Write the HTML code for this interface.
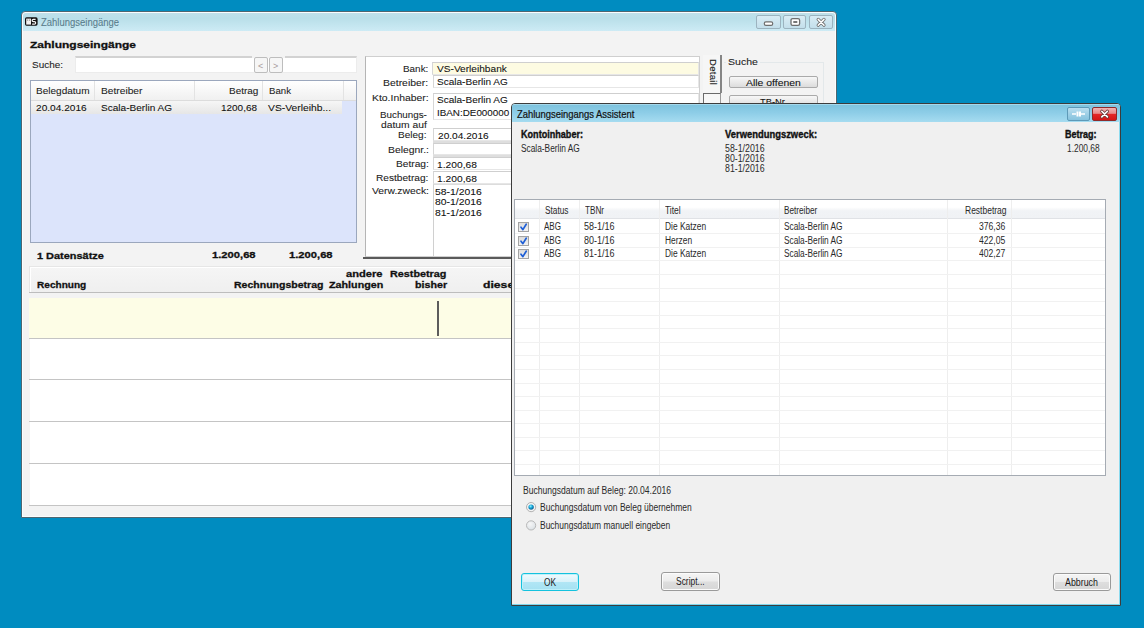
<!DOCTYPE html>
<html><head><meta charset="utf-8"><style>
html,body{margin:0;padding:0;}
body{width:1144px;height:628px;overflow:hidden;position:relative;background:#008cc0;font-family:"Liberation Sans",sans-serif;}
div,span{position:absolute;}
span{white-space:nowrap;}
</style></head><body>
<div style="left:21px;top:11px;width:816px;height:507px;background:#f3f3f3;border:1px solid #4f6670;border-radius:4px 4px 0 0;box-sizing:border-box;box-shadow:inset 0 0 0 1px #fbfdfe;"></div>
<div style="left:23px;top:13px;width:812px;height:18px;background:linear-gradient(#bfe0ea,#b9dfe9 30%,#cdebf5);border-radius:3px 3px 0 0;"></div>
<svg style="position:absolute;left:24px;top:16px" width="16" height="11" viewBox="0 0 16 11"><rect x="1" y="1.3" width="12.6" height="8.4" rx="1.6" fill="#111"/><rect x="2.2" y="2.6" width="4.8" height="6" fill="#f2f2f2"/><rect x="3" y="3.6" width="1.2" height="1" fill="#888"/><rect x="5" y="3.6" width="1.2" height="1" fill="#888"/><path d="M11.6 3.3 H9.4 Q8.2 3.3 8.2 4.6 Q8.2 5.7 9.4 5.7 H10.4 Q11.7 5.7 11.7 6.9 Q11.7 8.1 10.4 8.1 H8.1" fill="none" stroke="#f4f4f4" stroke-width="1.2"/></svg>
<span style="left:41.00px;top:17.63px;font-size:10px;line-height:10px;color:#5a7d8c;-webkit-text-stroke:0.08px #5a7d8c;transform-origin:0 0;transform:scaleX(0.9480);">Zahlungseingänge</span>
<div style="left:756px;top:15px;width:25px;height:14px;background:linear-gradient(#d9ecf4,#c3dfeb);border:1px solid #9cb3bf;box-sizing:border-box;border-radius:2px;"></div>
<div style="left:783px;top:15px;width:23px;height:14px;background:linear-gradient(#d9ecf4,#c3dfeb);border:1px solid #9cb3bf;box-sizing:border-box;border-radius:2px;"></div>
<div style="left:809px;top:15px;width:24px;height:14px;background:linear-gradient(#d9ecf4,#c3dfeb);border:1px solid #9cb3bf;box-sizing:border-box;border-radius:2px;"></div>
<svg style="position:absolute;left:756px;top:15px" width="80" height="14" viewBox="0 0 80 14"><rect x="8.3" y="6.8" width="8.4" height="3.6" rx="1.6" fill="#fff" stroke="#6e6e6e" stroke-width="1.2"/><rect x="35" y="3.6" width="8.6" height="6.8" rx="1.6" fill="#fff" stroke="#6e6e6e" stroke-width="1.3"/><rect x="37.3" y="6" width="4" height="2" fill="#777"/><path d="M62.2 4.4 L68 10.2 M68 4.4 L62.2 10.2" stroke="#6e6e6e" stroke-width="3.2" stroke-linecap="round"/><path d="M62.2 4.4 L68 10.2 M68 4.4 L62.2 10.2" stroke="#fff" stroke-width="1.5" stroke-linecap="round"/></svg>
<span style="left:30.00px;top:39.90px;font-size:9.8px;line-height:9.8px;color:#111;font-weight:bold;-webkit-text-stroke:0.3px #111;transform-origin:0 0;transform:scaleX(1.2245);">Zahlungseingänge</span>
<span style="left:32.30px;top:61.28px;font-size:9px;line-height:9px;color:#222;-webkit-text-stroke:0.08px #222;transform-origin:0 0;transform:scaleX(1.1064);">Suche:</span>
<div style="left:75px;top:56px;width:282px;height:17px;background:#fff;border:1px solid #ececec;border-top:2px solid #d2d2d2;box-sizing:border-box;"></div>
<div style="left:252px;top:56px;width:33px;height:2px;background:#f3f3f3;"></div>
<div style="left:254px;top:57px;width:14px;height:16px;background:#f6f6f6;border:1px solid #bdbdbd;box-sizing:border-box;border-radius:2px;"></div>
<div style="left:269px;top:57px;width:14px;height:16px;background:#f6f6f6;border:1px solid #bdbdbd;box-sizing:border-box;border-radius:2px;"></div>
<span style="left:258.00px;top:61.58px;font-size:9px;line-height:9px;color:#a89c9c;"><</span>
<span style="left:273.00px;top:61.58px;font-size:9px;line-height:9px;color:#a89c9c;">></span>
<div style="left:30px;top:80px;width:327px;height:163px;background:#dce4fb;border:1px solid #9ba7bd;box-sizing:border-box;"></div>
<div style="left:31px;top:81px;width:325px;height:19px;background:linear-gradient(#fff,#f0f0f0);"></div>
<div style="left:31px;top:100px;width:325px;height:1px;background:#dcdcdc;"></div>
<div style="left:94px;top:81px;width:1px;height:19px;background:#e3e3e3;"></div>
<div style="left:194px;top:81px;width:1px;height:19px;background:#e3e3e3;"></div>
<div style="left:262px;top:81px;width:1px;height:19px;background:#e3e3e3;"></div>
<div style="left:343px;top:81px;width:1px;height:19px;background:#e3e3e3;"></div>
<div style="left:31px;top:101px;width:311px;height:13px;background:linear-gradient(#f6f6f6,#e6e6e6);"></div>
<span style="left:36.40px;top:86.32px;font-size:9.9px;line-height:9.9px;color:#222;-webkit-text-stroke:0.08px #222;transform-origin:0 0;transform:scaleX(1.0164);">Belegdatum</span>
<span style="left:100.50px;top:86.32px;font-size:9.9px;line-height:9.9px;color:#222;-webkit-text-stroke:0.08px #222;transform-origin:0 0;transform:scaleX(1.0332);">Betreiber</span>
<span style="left:228.50px;top:86.32px;font-size:9.9px;line-height:9.9px;color:#222;-webkit-text-stroke:0.08px #222;transform-origin:0 0;transform:scaleX(1.0080);">Betrag</span>
<span style="left:268.60px;top:86.32px;font-size:9.9px;line-height:9.9px;color:#222;-webkit-text-stroke:0.08px #222;transform-origin:0 0;transform:scaleX(0.9750);">Bank</span>
<span style="left:36.40px;top:103.12px;font-size:9.9px;line-height:9.9px;color:#111;-webkit-text-stroke:0.08px #111;transform-origin:0 0;transform:scaleX(1.0254);">20.04.2016</span>
<span style="left:100.50px;top:103.12px;font-size:9.9px;line-height:9.9px;color:#111;-webkit-text-stroke:0.08px #111;transform-origin:0 0;transform:scaleX(1.0189);">Scala-Berlin AG</span>
<span style="left:220.70px;top:103.12px;font-size:9.9px;line-height:9.9px;color:#111;-webkit-text-stroke:0.08px #111;transform-origin:0 0;transform:scaleX(1.0089);">1200,68</span>
<span style="left:268.30px;top:103.12px;font-size:9.9px;line-height:9.9px;color:#111;-webkit-text-stroke:0.08px #111;transform-origin:0 0;transform:scaleX(1.0441);">VS-Verleihb...</span>
<span style="left:36.80px;top:250.62px;font-size:9.9px;line-height:9.9px;color:#111;font-weight:bold;-webkit-text-stroke:0.3px #111;transform-origin:0 0;transform:scaleX(1.1070);">1 Datensätze</span>
<span style="left:212.10px;top:250.12px;font-size:9.9px;line-height:9.9px;color:#111;font-weight:bold;-webkit-text-stroke:0.3px #111;transform-origin:0 0;transform:scaleX(1.1341);">1.200,68</span>
<span style="left:288.50px;top:250.12px;font-size:9.9px;line-height:9.9px;color:#111;font-weight:bold;-webkit-text-stroke:0.3px #111;transform-origin:0 0;transform:scaleX(1.1341);">1.200,68</span>
<div style="left:365px;top:56px;width:335px;height:201px;background:#fff;border:1px solid #cfcfcf;border-left:1.5px solid #b5b5b5;box-sizing:border-box;"></div>
<div style="left:363px;top:257px;width:338px;height:1.5px;background:#5a5a5a;"></div>
<span style="left:403.10px;top:64.02px;font-size:9.9px;line-height:9.9px;color:#222;-webkit-text-stroke:0.08px #222;transform-origin:0 0;transform:scaleX(1.0034);">Bank:</span>
<span style="left:382.80px;top:78.32px;font-size:9.9px;line-height:9.9px;color:#222;-webkit-text-stroke:0.08px #222;transform-origin:0 0;transform:scaleX(1.0555);">Betreiber:</span>
<span style="left:371.70px;top:93.32px;font-size:9.9px;line-height:9.9px;color:#222;-webkit-text-stroke:0.08px #222;transform-origin:0 0;transform:scaleX(1.0532);">Kto.Inhaber:</span>
<span style="left:379.60px;top:109.72px;font-size:9.9px;line-height:9.9px;color:#222;-webkit-text-stroke:0.08px #222;transform-origin:0 0;transform:scaleX(0.9931);">Buchungs-</span>
<span style="left:380.90px;top:119.52px;font-size:9.9px;line-height:9.9px;color:#222;-webkit-text-stroke:0.08px #222;transform-origin:0 0;transform:scaleX(1.0426);">datum auf</span>
<span style="left:398.10px;top:129.92px;font-size:9.9px;line-height:9.9px;color:#222;-webkit-text-stroke:0.08px #222;transform-origin:0 0;transform:scaleX(1.0153);">Beleg:</span>
<span style="left:387.70px;top:144.92px;font-size:9.9px;line-height:9.9px;color:#222;-webkit-text-stroke:0.08px #222;transform-origin:0 0;transform:scaleX(1.0518);">Belegnr.:</span>
<span style="left:395.90px;top:159.32px;font-size:9.9px;line-height:9.9px;color:#222;-webkit-text-stroke:0.08px #222;transform-origin:0 0;transform:scaleX(1.0308);">Betrag:</span>
<span style="left:376.30px;top:173.02px;font-size:9.9px;line-height:9.9px;color:#222;-webkit-text-stroke:0.08px #222;transform-origin:0 0;transform:scaleX(1.0259);">Restbetrag:</span>
<span style="left:371.70px;top:186.02px;font-size:9.9px;line-height:9.9px;color:#222;-webkit-text-stroke:0.08px #222;transform-origin:0 0;transform:scaleX(1.0483);">Verw.zweck:</span>
<div style="left:432px;top:62px;width:267px;height:13px;background:#fdfbe2;border:1px solid #e6e6e6;border-top:1px solid #cfcfcf;border-left:1px solid #d6d6d6;box-sizing:border-box;"></div>
<div style="left:433px;top:75px;width:266px;height:13px;background:#fff;border:1px solid #e6e6e6;border-top:1px solid #cfcfcf;border-left:1px solid #d6d6d6;box-sizing:border-box;"></div>
<div style="left:433px;top:93px;width:266px;height:27px;background:#fff;border:1px solid #e6e6e6;border-top:1px solid #cfcfcf;border-left:1px solid #d6d6d6;box-sizing:border-box;"></div>
<div style="left:433px;top:128px;width:266px;height:13px;background:#fff;border:1px solid #e6e6e6;border-top:1px solid #cfcfcf;border-left:1px solid #d6d6d6;box-sizing:border-box;"></div>
<div style="left:433px;top:141px;width:266px;height:2px;background:#dedede;"></div>
<div style="left:433px;top:143px;width:266px;height:12px;background:#fff;border:1px solid #e6e6e6;border-top:1px solid #cfcfcf;border-left:1px solid #d6d6d6;box-sizing:border-box;"></div>
<div style="left:433px;top:155px;width:266px;height:2px;background:#dedede;"></div>
<div style="left:433px;top:157px;width:266px;height:13px;background:#fff;border:1px solid #e6e6e6;border-top:1px solid #cfcfcf;border-left:1px solid #d6d6d6;box-sizing:border-box;"></div>
<div style="left:433px;top:171px;width:266px;height:13px;background:#fff;border:1px solid #e6e6e6;border-top:1px solid #cfcfcf;border-left:1px solid #d6d6d6;box-sizing:border-box;"></div>
<div style="left:433px;top:184px;width:266px;height:72px;background:#fff;border-left:1px solid #d0d0d0;border-top:1px solid #dcdcdc;box-sizing:border-box;"></div>
<span style="left:436.80px;top:64.22px;font-size:9.9px;line-height:9.9px;color:#111;-webkit-text-stroke:0.08px #111;transform-origin:0 0;transform:scaleX(1.0258);">VS-Verleihbank</span>
<span style="left:436.80px;top:77.02px;font-size:9.9px;line-height:9.9px;color:#111;-webkit-text-stroke:0.08px #111;transform-origin:0 0;transform:scaleX(1.0160);">Scala-Berlin AG</span>
<span style="left:436.80px;top:95.42px;font-size:9.9px;line-height:9.9px;color:#111;-webkit-text-stroke:0.08px #111;transform-origin:0 0;transform:scaleX(1.0160);">Scala-Berlin AG</span>
<span style="left:437.20px;top:107.52px;font-size:9.9px;line-height:9.9px;color:#111;-webkit-text-stroke:0.08px #111;transform-origin:0 0;transform:scaleX(0.9967);">IBAN:DE000000</span>
<span style="left:437.50px;top:131.02px;font-size:9.9px;line-height:9.9px;color:#111;-webkit-text-stroke:0.08px #111;transform-origin:0 0;transform:scaleX(1.0254);">20.04.2016</span>
<span style="left:437.00px;top:159.92px;font-size:9.9px;line-height:9.9px;color:#111;-webkit-text-stroke:0.08px #111;transform-origin:0 0;transform:scaleX(1.0381);">1.200,68</span>
<span style="left:437.00px;top:173.62px;font-size:9.9px;line-height:9.9px;color:#111;-webkit-text-stroke:0.08px #111;transform-origin:0 0;transform:scaleX(1.0381);">1.200,68</span>
<span style="left:434.50px;top:186.92px;font-size:9.9px;line-height:9.9px;color:#111;-webkit-text-stroke:0.08px #111;transform-origin:0 0;transform:scaleX(1.0497);">58-1/2016</span>
<span style="left:434.50px;top:197.12px;font-size:9.9px;line-height:9.9px;color:#111;-webkit-text-stroke:0.08px #111;transform-origin:0 0;transform:scaleX(1.0497);">80-1/2016</span>
<span style="left:434.50px;top:207.52px;font-size:9.9px;line-height:9.9px;color:#111;-webkit-text-stroke:0.08px #111;transform-origin:0 0;transform:scaleX(1.0497);">81-1/2016</span>
<div style="left:703px;top:55px;width:19px;height:38px;background:#f6f6f6;border-right:2px solid #858585;box-sizing:border-box;"></div>
<div style="left:703px;top:93px;width:18px;height:20px;background:#f7f7f7;border:1px solid #6a6a6a;border-bottom:none;border-right-color:#999;box-sizing:border-box;"></div>
<span style="left:707px;top:59px;font-size:9.5px;line-height:12px;transform-origin:0 0;transform:translate(12px,0) rotate(90deg);letter-spacing:0.3px;color:#1a1a1a;-webkit-text-stroke:0.15px #1a1a1a;">Detail</span>
<div style="left:724px;top:62px;width:100px;height:60px;border-top:1px solid #e3e8ea;border-right:1px solid #e3e8ea;box-sizing:border-box;"></div>
<div style="left:726px;top:56px;width:34px;height:10px;background:#f3f3f3;"></div>
<span style="left:728.30px;top:56.92px;font-size:9.9px;line-height:9.9px;color:#222;-webkit-text-stroke:0.08px #222;transform-origin:0 0;transform:scaleX(1.0688);">Suche</span>
<div style="left:729px;top:76px;width:89px;height:12px;background:linear-gradient(#f7f7f7,#dcdcdc);border:1px solid #aaa;border-radius:2px;box-sizing:border-box;"></div>
<span style="left:746.00px;top:78.32px;font-size:9.9px;line-height:9.9px;color:#111;-webkit-text-stroke:0.08px #111;transform-origin:0 0;transform:scaleX(1.0555);">Alle offenen</span>
<div style="left:729px;top:95px;width:89px;height:12px;background:linear-gradient(#f7f7f7,#dcdcdc);border:1px solid #aaa;border-radius:2px;box-sizing:border-box;"></div>
<span style="left:760.00px;top:97.32px;font-size:9.9px;line-height:9.9px;color:#111;-webkit-text-stroke:0.08px #111;transform-origin:0 0;transform:scaleX(0.9442);">TB-Nr.</span>
<div style="left:29px;top:266px;width:808px;height:27px;background:linear-gradient(#f5f5f5,#efefef);border-top:1px solid #e6e6e6;border-left:1px solid #e6e6e6;box-sizing:border-box;box-shadow:inset 1px 1px 0 #fff;"></div>
<div style="left:29px;top:292px;width:808px;height:1px;background:#bdbdbd;"></div>
<div style="left:29px;top:293px;width:808px;height:5px;background:#f3f3f3;"></div>
<div style="left:29px;top:298px;width:808px;height:40px;background:#fdfde6;"></div>
<div style="left:29px;top:338px;width:808px;height:1px;background:#c4c4c4;"></div>
<div style="left:30px;top:339px;width:807px;height:40px;background:#fff;"></div>
<div style="left:30px;top:380px;width:807px;height:41px;background:#fff;"></div>
<div style="left:30px;top:422px;width:807px;height:41px;background:#fff;"></div>
<div style="left:30px;top:464px;width:807px;height:41px;background:#fff;"></div>
<div style="left:29px;top:379px;width:808px;height:1px;background:#c4c4c4;"></div>
<div style="left:29px;top:421px;width:808px;height:1px;background:#c4c4c4;"></div>
<div style="left:29px;top:463px;width:808px;height:1px;background:#c4c4c4;"></div>
<div style="left:29px;top:505px;width:808px;height:1px;background:#c4c4c4;"></div>
<div style="left:437px;top:301px;width:1.5px;height:35px;background:#5c5c5c;"></div>
<span style="left:36.50px;top:279.82px;font-size:9.9px;line-height:9.9px;color:#111;font-weight:bold;-webkit-text-stroke:0.3px #111;transform-origin:0 0;transform:scaleX(1.0208);">Rechnung</span>
<span style="left:234.40px;top:279.82px;font-size:9.9px;line-height:9.9px;color:#111;font-weight:bold;-webkit-text-stroke:0.3px #111;transform-origin:0 0;transform:scaleX(1.0659);">Rechnungsbetrag</span>
<span style="left:346.40px;top:269.32px;font-size:9.9px;line-height:9.9px;color:#111;font-weight:bold;-webkit-text-stroke:0.3px #111;transform-origin:0 0;transform:scaleX(1.1274);">andere</span>
<span style="left:328.60px;top:279.62px;font-size:9.9px;line-height:9.9px;color:#111;font-weight:bold;-webkit-text-stroke:0.3px #111;transform-origin:0 0;transform:scaleX(1.0871);">Zahlungen</span>
<span style="left:390.40px;top:269.32px;font-size:9.9px;line-height:9.9px;color:#111;font-weight:bold;-webkit-text-stroke:0.3px #111;transform-origin:0 0;transform:scaleX(1.0926);">Restbetrag</span>
<span style="left:414.80px;top:279.62px;font-size:9.9px;line-height:9.9px;color:#111;font-weight:bold;-webkit-text-stroke:0.3px #111;transform-origin:0 0;transform:scaleX(1.0839);">bisher</span>
<span style="left:482.50px;top:279.62px;font-size:9.9px;line-height:9.9px;color:#111;font-weight:bold;-webkit-text-stroke:0.3px #111;transform-origin:0 0;transform:scaleX(1.2343);">dieser</span>
<div style="left:511px;top:103px;width:610px;height:503px;background:#f0f0f0;border:1px solid #3c3c3c;border-radius:4px 4px 0 0;box-sizing:border-box;box-shadow:inset 0 0 0 1px #bfe6f5;"></div>
<div style="left:512px;top:104px;width:608px;height:19px;background:linear-gradient(#b8e2f2 0,#7fc4df 1.5px,#8dcde7 45%,#a8ddf1);border-radius:3px 3px 0 0;"></div>
<span style="left:517.20px;top:110.27px;font-size:10.2px;line-height:10.2px;color:#111;-webkit-text-stroke:0.2px #111;transform-origin:0 0;transform:scaleX(0.9243);">Zahlungseingangs Assistent</span>
<div style="left:1067px;top:107px;width:23px;height:14px;background:linear-gradient(#b9def0,#9fd0e6 50%,#86c3de);border:1px solid #5e9ab8;border-radius:2px;box-sizing:border-box;"></div>
<svg style="position:absolute;left:1067px;top:107px" width="23" height="14" viewBox="0 0 23 14"><path d="M5 7 H9 M14 7 H18" stroke="#fff" stroke-width="1.5"/><rect x="9.5" y="4.5" width="2" height="5" fill="#fff"/><rect x="12" y="4.5" width="2" height="5" fill="#fff"/></svg>
<div style="left:1092px;top:107px;width:25px;height:14px;background:linear-gradient(#f2b3b3,#e88a8a 45%,#e52727 50%,#d41616);border:1px solid #8f2a2a;border-radius:2px;box-sizing:border-box;"></div>
<svg style="position:absolute;left:1092px;top:107px" width="25" height="14" viewBox="0 0 25 14"><path d="M9.8 4.3 L15.4 9.9 M15.4 4.3 L9.8 9.9" stroke="#6a3a3a" stroke-width="3.2" stroke-linecap="round"/><path d="M9.8 4.3 L15.4 9.9 M15.4 4.3 L9.8 9.9" stroke="#fff" stroke-width="1.6" stroke-linecap="round"/></svg>
<div style="left:512px;top:122px;width:608px;height:483px;background:#f0f0f0;"></div>
<div style="left:1119px;top:122px;width:1px;height:483px;background:#8fdcf0;"></div>
<div style="left:512px;top:604px;width:608px;height:1px;background:#7fd6ec;"></div>
<span style="left:520.80px;top:129.73px;font-size:10px;line-height:10px;color:#111;font-weight:bold;-webkit-text-stroke:0.35px #111;transform-origin:0 0;transform:scaleX(0.9075);">Kontoinhaber:</span>
<span style="left:520.80px;top:143.84px;font-size:10px;line-height:10px;color:#2a2a2a;transform-origin:0 0;transform:scaleX(0.8330);">Scala-Berlin AG</span>
<span style="left:725.20px;top:129.94px;font-size:10px;line-height:10px;color:#111;font-weight:bold;-webkit-text-stroke:0.35px #111;transform-origin:0 0;transform:scaleX(0.9407);">Verwendungszweck:</span>
<span style="left:725.20px;top:143.53px;font-size:10px;line-height:10px;color:#2a2a2a;transform-origin:0 0;transform:scaleX(0.8793);">58-1/2016</span>
<span style="left:725.20px;top:153.73px;font-size:10px;line-height:10px;color:#2a2a2a;transform-origin:0 0;transform:scaleX(0.8793);">80-1/2016</span>
<span style="left:725.20px;top:163.94px;font-size:10px;line-height:10px;color:#2a2a2a;transform-origin:0 0;transform:scaleX(0.8793);">81-1/2016</span>
<span style="left:1064.80px;top:129.94px;font-size:10px;line-height:10px;color:#111;font-weight:bold;-webkit-text-stroke:0.35px #111;transform-origin:0 0;transform:scaleX(0.9028);">Betrag:</span>
<span style="left:1067.40px;top:143.73px;font-size:10px;line-height:10px;color:#2a2a2a;transform-origin:0 0;transform:scaleX(0.8376);">1.200,68</span>
<div style="left:514px;top:199px;width:592px;height:277px;background:#fff;border:1px solid #a5abb3;box-sizing:border-box;"></div>
<div style="left:515px;top:200px;width:590px;height:18px;background:linear-gradient(#fff 40%,#f1f3f6 60%,#f0f2f5);"></div>
<div style="left:515px;top:218px;width:590px;height:1px;background:#e0e2e6;"></div>
<div style="left:539px;top:200px;width:1px;height:275px;background:#eeeeee;"></div>
<div style="left:579px;top:200px;width:1px;height:275px;background:#eeeeee;"></div>
<div style="left:659px;top:200px;width:1px;height:275px;background:#eeeeee;"></div>
<div style="left:779px;top:200px;width:1px;height:275px;background:#eeeeee;"></div>
<div style="left:947px;top:200px;width:1px;height:275px;background:#eeeeee;"></div>
<div style="left:1011px;top:200px;width:1px;height:275px;background:#eeeeee;"></div>
<div style="left:515px;top:233px;width:590px;height:1px;background:#f1f1f1;"></div>
<div style="left:515px;top:247px;width:590px;height:1px;background:#f1f1f1;"></div>
<div style="left:515px;top:260px;width:590px;height:1px;background:#f1f1f1;"></div>
<div style="left:515px;top:274px;width:590px;height:1px;background:#f1f1f1;"></div>
<div style="left:515px;top:288px;width:590px;height:1px;background:#f1f1f1;"></div>
<div style="left:515px;top:301px;width:590px;height:1px;background:#f1f1f1;"></div>
<div style="left:515px;top:315px;width:590px;height:1px;background:#f1f1f1;"></div>
<div style="left:515px;top:328px;width:590px;height:1px;background:#f1f1f1;"></div>
<div style="left:515px;top:342px;width:590px;height:1px;background:#f1f1f1;"></div>
<div style="left:515px;top:355px;width:590px;height:1px;background:#f1f1f1;"></div>
<div style="left:515px;top:369px;width:590px;height:1px;background:#f1f1f1;"></div>
<div style="left:515px;top:383px;width:590px;height:1px;background:#f1f1f1;"></div>
<div style="left:515px;top:396px;width:590px;height:1px;background:#f1f1f1;"></div>
<div style="left:515px;top:410px;width:590px;height:1px;background:#f1f1f1;"></div>
<div style="left:515px;top:423px;width:590px;height:1px;background:#f1f1f1;"></div>
<div style="left:515px;top:437px;width:590px;height:1px;background:#f1f1f1;"></div>
<div style="left:515px;top:450px;width:590px;height:1px;background:#f1f1f1;"></div>
<div style="left:515px;top:464px;width:590px;height:1px;background:#f1f1f1;"></div>
<span style="left:544.50px;top:205.94px;font-size:10px;line-height:10px;color:#2a2a2a;transform-origin:0 0;transform:scaleX(0.8290);">Status</span>
<span style="left:584.90px;top:205.94px;font-size:10px;line-height:10px;color:#2a2a2a;transform-origin:0 0;transform:scaleX(0.8187);">TBNr</span>
<span style="left:664.60px;top:205.94px;font-size:10px;line-height:10px;color:#2a2a2a;transform-origin:0 0;transform:scaleX(0.8477);">Titel</span>
<span style="left:784.40px;top:205.94px;font-size:10px;line-height:10px;color:#2a2a2a;transform-origin:0 0;transform:scaleX(0.8183);">Betreiber</span>
<span style="left:965.20px;top:205.94px;font-size:10px;line-height:10px;color:#2a2a2a;transform-origin:0 0;transform:scaleX(0.8485);">Restbetrag</span>
<div style="left:518px;top:222px;width:11px;height:10px;background:linear-gradient(#dcdcdc,#f2f2f2);border:1px solid #a3a3a3;box-sizing:border-box;"></div>
<svg style="position:absolute;left:518px;top:222px" width="11" height="10" viewBox="0 0 11 10"><path d="M3 5.2 L4.9 7.6 L8.2 2.2" fill="none" stroke="#1f5fd6" stroke-width="1.7" stroke-linejoin="round" stroke-linecap="round"/></svg>
<span style="left:544.00px;top:222.34px;font-size:10px;line-height:10px;color:#2a2a2a;transform-origin:0 0;transform:scaleX(0.8050);">ABG</span>
<span style="left:584.40px;top:222.34px;font-size:10px;line-height:10px;color:#2a2a2a;transform-origin:0 0;transform:scaleX(0.8994);">58-1/16</span>
<span style="left:664.60px;top:222.34px;font-size:10px;line-height:10px;color:#2a2a2a;transform-origin:0 0;transform:scaleX(0.8402);">Die Katzen</span>
<span style="left:784.40px;top:222.34px;font-size:10px;line-height:10px;color:#2a2a2a;transform-origin:0 0;transform:scaleX(0.8288);">Scala-Berlin AG</span>
<span style="left:978.80px;top:222.34px;font-size:10px;line-height:10px;color:#2a2a2a;transform-origin:0 0;transform:scaleX(0.8567);">376,36</span>
<div style="left:518px;top:236px;width:11px;height:10px;background:linear-gradient(#dcdcdc,#f2f2f2);border:1px solid #a3a3a3;box-sizing:border-box;"></div>
<svg style="position:absolute;left:518px;top:236px" width="11" height="10" viewBox="0 0 11 10"><path d="M3 5.2 L4.9 7.6 L8.2 2.2" fill="none" stroke="#1f5fd6" stroke-width="1.7" stroke-linejoin="round" stroke-linecap="round"/></svg>
<span style="left:544.00px;top:235.84px;font-size:10px;line-height:10px;color:#2a2a2a;transform-origin:0 0;transform:scaleX(0.8050);">ABG</span>
<span style="left:584.40px;top:235.84px;font-size:10px;line-height:10px;color:#2a2a2a;transform-origin:0 0;transform:scaleX(0.8994);">80-1/16</span>
<span style="left:664.60px;top:235.84px;font-size:10px;line-height:10px;color:#2a2a2a;transform-origin:0 0;transform:scaleX(0.8407);">Herzen</span>
<span style="left:784.40px;top:235.84px;font-size:10px;line-height:10px;color:#2a2a2a;transform-origin:0 0;transform:scaleX(0.8288);">Scala-Berlin AG</span>
<span style="left:978.80px;top:235.84px;font-size:10px;line-height:10px;color:#2a2a2a;transform-origin:0 0;transform:scaleX(0.8567);">422,05</span>
<div style="left:518px;top:249px;width:11px;height:10px;background:linear-gradient(#dcdcdc,#f2f2f2);border:1px solid #a3a3a3;box-sizing:border-box;"></div>
<svg style="position:absolute;left:518px;top:249px" width="11" height="10" viewBox="0 0 11 10"><path d="M3 5.2 L4.9 7.6 L8.2 2.2" fill="none" stroke="#1f5fd6" stroke-width="1.7" stroke-linejoin="round" stroke-linecap="round"/></svg>
<span style="left:544.00px;top:249.34px;font-size:10px;line-height:10px;color:#2a2a2a;transform-origin:0 0;transform:scaleX(0.8050);">ABG</span>
<span style="left:584.40px;top:249.34px;font-size:10px;line-height:10px;color:#2a2a2a;transform-origin:0 0;transform:scaleX(0.8994);">81-1/16</span>
<span style="left:664.60px;top:249.34px;font-size:10px;line-height:10px;color:#2a2a2a;transform-origin:0 0;transform:scaleX(0.8402);">Die Katzen</span>
<span style="left:784.40px;top:249.34px;font-size:10px;line-height:10px;color:#2a2a2a;transform-origin:0 0;transform:scaleX(0.8288);">Scala-Berlin AG</span>
<span style="left:978.80px;top:249.34px;font-size:10px;line-height:10px;color:#2a2a2a;transform-origin:0 0;transform:scaleX(0.8567);">402,27</span>
<span style="left:522.70px;top:485.94px;font-size:10px;line-height:10px;color:#2a2a2a;transform-origin:0 0;transform:scaleX(0.8560);">Buchungsdatum auf Beleg: 20.04.2016</span>
<svg style="position:absolute;left:525px;top:501px" width="13" height="13" viewBox="0 0 13 13"><defs><radialGradient id="rg1" cx="0.4" cy="0.35" r="0.7"><stop offset="0" stop-color="#8ff0ff"/><stop offset="0.45" stop-color="#16a6d8"/><stop offset="1" stop-color="#0a4f80"/></radialGradient></defs><circle cx="6.1" cy="6.1" r="4.6" fill="#f4f4f4" stroke="#b0b0b0" stroke-width="1"/><circle cx="6.1" cy="6.1" r="2.7" fill="url(#rg1)"/></svg>
<svg style="position:absolute;left:525px;top:519px" width="13" height="13" viewBox="0 0 13 13"><defs><radialGradient id="rg2" cx="0.4" cy="0.35" r="0.8"><stop offset="0" stop-color="#f6f6f6"/><stop offset="1" stop-color="#d6dde2"/></radialGradient></defs><circle cx="6.1" cy="6.4" r="4.6" fill="url(#rg2)" stroke="#b8b8b8" stroke-width="1"/></svg>
<span style="left:539.60px;top:502.54px;font-size:10px;line-height:10px;color:#2a2a2a;transform-origin:0 0;transform:scaleX(0.8507);">Buchungsdatum von Beleg übernehmen</span>
<span style="left:539.60px;top:520.74px;font-size:10px;line-height:10px;color:#2a2a2a;transform-origin:0 0;transform:scaleX(0.8455);">Buchungsdatum manuell eingeben</span>
<div style="left:521px;top:573px;width:58px;height:18px;background:linear-gradient(#f0fafd,#d9f2fa 48%,#b1e6f5 52%,#a5e1f2);border:1px solid #14c2de;border-radius:3px;box-sizing:border-box;box-shadow:inset 0 0 0 1px #bff0fa;"></div>
<span style="left:544.10px;top:577.83px;font-size:10px;line-height:10px;color:#1a1a1a;transform-origin:0 0;transform:scaleX(0.8305);">OK</span>
<div style="left:661px;top:572px;width:59px;height:19px;background:linear-gradient(#f5f5f5,#ececec 48%,#dedede 52%,#d6d6d6);border:1px solid #9a9a9a;border-radius:3px;box-sizing:border-box;box-shadow:inset 0 0 0 1px #fbfbfb;"></div>
<span style="left:675.90px;top:577.33px;font-size:10px;line-height:10px;color:#1a1a1a;transform-origin:0 0;transform:scaleX(0.8438);">Script...</span>
<div style="left:1053px;top:573px;width:58px;height:18px;background:linear-gradient(#f5f5f5,#ececec 48%,#dedede 52%,#d6d6d6);border:1px solid #9a9a9a;border-radius:3px;box-sizing:border-box;box-shadow:inset 0 0 0 1px #fbfbfb;"></div>
<span style="left:1065.40px;top:577.74px;font-size:10px;line-height:10px;color:#1a1a1a;transform-origin:0 0;transform:scaleX(0.8834);">Abbruch</span>
</body></html>
